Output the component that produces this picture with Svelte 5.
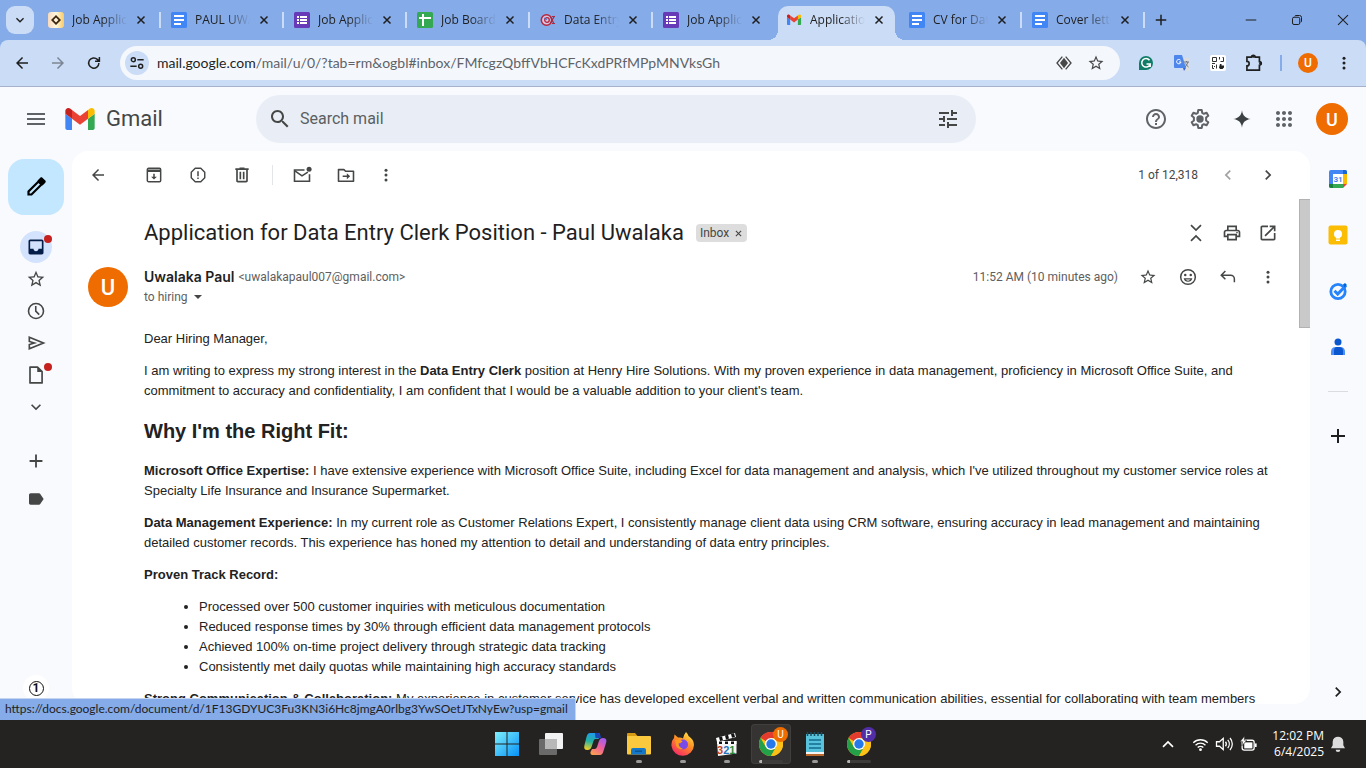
<script>
  const icons = {
    back: '<path d="M20 11H7.83l5.59-5.59L12 4l-8 8 8 8 1.41-1.41L7.83 13H20v-2z"/>',
    forward: '<path d="M4 11h12.17l-5.59-5.59L12 4l8 8-8 8-1.41-1.41L16.17 13H4v-2z"/>',
    reload: '<path d="M18.500 12a6.800 6.800 0 1 1-2-4.800L19 9.500M19.200 4v5.800h-5.800" fill="none" stroke="currentColor" stroke-width="2"/>',
    down: '<path d="M7.41 8.59L12 13.17l4.59-4.58L18 10l-6 6-6-6z"/>',
    left: '<path d="M15.41 7.41L14 6l-6 6 6 6 1.41-1.41L10.83 12z"/>',
    right: '<path d="M10 6L8.59 7.41 13.17 12l-4.58 4.59L10 18l6-6z"/>',
    close: '<path d="M5 5l14 14M19 5L5 19" fill="none" stroke="currentColor" stroke-width="3"/>',
    plus: '<path d="M19 13h-6v6h-2v-6H5v-2h6V5h2v6h6z"/>',
    more: '<circle cx="12" cy="5.500" r="2"/><circle cx="12" cy="12" r="2"/><circle cx="12" cy="18.500" r="2"/>',
    site: '<g fill="none" stroke="currentColor" stroke-width="2.2"><circle cx="6.500" cy="7" r="3"/><path d="M12.500 7H22M2 17h9.500"/><circle cx="17.500" cy="17" r="3"/></g>',
    diamond: '<path d="M9.500 2.500L1.500 12l8 9.500M14.500 2.500l8 9.500-8 9.500" fill="none" stroke="currentColor" stroke-width="2"/><path d="M12 4l6 8-6 8-6-8z"/>',
    star: '<path d="M22 9.240l-7.190-.620L12 2 9.190 8.630 2 9.240l5.460 4.730L5.820 21 12 17.270 18.180 21l-1.630-7.030L22 9.240zM12 15.400l-3.760 2.270 1-4.280-3.320-2.880 4.380-.380L12 6.100l1.710 4.040 4.380.380-3.320 2.880 1 4.280L12 15.400z"/>',
    puzzle: '<path d="M3.500 5h5.500a2.200 2.200 0 0 1 4.400 0H18.500v5.300a2.200 2.200 0 0 1 0 4.400V20.500h-15v-5a2.700 2.700 0 0 0 0-5.400z" fill="none" stroke="currentColor" stroke-width="2"/><circle cx="11.200" cy="4.200" r="1.600"/><circle cx="19.800" cy="12.500" r="1.600"/>',
    menu: '<path d="M3 18h18v-2H3v2zm0-5h18v-2H3v2zm0-7v2h18V6H3z"/>',
    search: '<path d="M15.500 14h-.790l-.280-.270C15.410 12.590 16 11.110 16 9.500 16 5.910 13.090 3 9.500 3S3 5.910 3 9.500 5.910 16 9.500 16c1.610 0 3.090-.590 4.230-1.570l.270.280v.790l5 4.990L20.490 19l-4.990-5zm-6 0C7.010 14 5 11.990 5 9.500S7.010 5 9.500 5 14 7.010 14 9.500 11.990 14 9.500 14z"/>',
    tune: '<path d="M3 17v2h6v-2H3zM3 5v2h10V5H3zm10 16v-2h8v-2h-8v-2h-2v6h2zM7 9v2H3v2h4v2h2V9H7zm14 4v-2H11v2h10zm-6-4h2V7h4V5h-4V3h-2v6z"/>',
    help: '<path d="M11 18h2v-2h-2v2zm1-16C6.480 2 2 6.480 2 12s4.480 10 10 10 10-4.480 10-10S17.520 2 12 2zm0 18c-4.410 0-8-3.590-8-8s3.590-8 8-8 8 3.590 8 8-3.590 8-8 8zm0-14c-2.210 0-4 1.790-4 4h2c0-1.100.900-2 2-2s2 .900 2 2c0 2-3 1.750-3 5h2c0-2.250 3-2.500 3-5 0-2.210-1.790-4-4-4z"/>',
    gear: '<path d="M10.300 3h3.400l.5 2.800 1.700 1 2.700-1 1.700 3-2.200 1.800v2.800l2.200 1.800-1.700 3-2.700-1-1.700 1-.5 2.800h-3.400l-.5-2.800-1.700-1-2.700 1-1.700-3 2.200-1.800v-2.800L3.700 8.800l1.700-3 2.700 1 1.700-1z" fill="none" stroke="currentColor" stroke-width="2" stroke-linejoin="round"/><circle cx="12" cy="12" r="3.700"/>',
    spark: '<path d="M12 1.500c.8 6.400 4.100 9.700 10.500 10.500-6.400.8-9.700 4.100-10.500 10.500C11.200 16.100 7.900 12.800 1.500 12 7.900 11.200 11.200 7.900 12 1.500z"/>',
    apps: '<path d="M6 8c1.100 0 2-.9 2-2s-.9-2-2-2-2 .9-2 2 .9 2 2 2zm6 12c1.100 0 2-.9 2-2s-.9-2-2-2-2 .9-2 2 .9 2 2 2zm-6 0c1.100 0 2-.9 2-2s-.9-2-2-2-2 .9-2 2 .9 2 2 2zm0-6c1.100 0 2-.9 2-2s-.9-2-2-2-2 .9-2 2 .9 2 2 2zm6 0c1.100 0 2-.9 2-2s-.9-2-2-2-2 .9-2 2 .9 2 2 2zm4-8c0 1.100.9 2 2 2s2-.9 2-2-.9-2-2-2-2 .9-2 2zm-4 2c1.100 0 2-.9 2-2s-.9-2-2-2-2 .9-2 2 .9 2 2 2zm6 6c1.100 0 2-.9 2-2s-.9-2-2-2-2 .9-2 2 .9 2 2 2zm0 6c1.100 0 2-.9 2-2s-.9-2-2-2-2 .9-2 2 .9 2 2 2z"/>',
    archive: '<rect x="4" y="4" width="16" height="16" rx="1.500" fill="none" stroke="currentColor" stroke-width="1.800"/><path d="M4 5.500h16V8.300H4zM11.100 10.500h1.800v3.500h2.600L12 17.500 8.500 14h2.600z"/>',
    spam: '<path d="M8.300 3h7.400L21 8.300v7.400L15.700 21H8.300L3 15.700V8.300z" fill="none" stroke="currentColor" stroke-width="1.900" stroke-linejoin="round"/><path d="M11 7h2v6.500h-2zM11 15.300h2v2h-2z"/>',
    trash: '<path d="M15 4V3H9v1H4v2h1v13c0 1.100.9 2 2 2h10c1.100 0 2-.9 2-2V6h1V4h-5zm2 15H7V6h10v13zM9 8h2v9H9zm4 0h2v9h-2z"/>',
    unread: '<path d="M15 6H3v13.500h18V11" fill="none" stroke="currentColor" stroke-width="1.900"/><path d="M3.500 7l8.500 6 7-4.500" fill="none" stroke="currentColor" stroke-width="1.900"/><circle cx="20.500" cy="5" r="3"/>',
    move: '<path d="M3 5.500h6.500l2 2H21v12H3z" fill="none" stroke="currentColor" stroke-width="1.900" stroke-linejoin="round"/><path d="M8 12.600h5V10l4 3.500-4 3.500v-2.600H8z"/>',
    fold: '<path d="M6 2.500l6 6 6-6M6 21.500l6-6 6 6" fill="none" stroke="currentColor" stroke-width="2"/>',
    print: '<path d="M19 8h-1V3H6v5H5c-1.660 0-3 1.340-3 3v6h4v4h12v-4h4v-6c0-1.660-1.340-3-3-3zM8 5h8v3H8V5zm8 12v2H8v-4h8v2zm2-2v-2H6v2H4v-4c0-.550.450-1 1-1h14c.550 0 1 .450 1 1v4h-2z"/><circle cx="18" cy="11.500" r="1"/>',
    open: '<path d="M19 19H5V5h7V3H5c-1.110 0-2 .9-2 2v14c0 1.100.890 2 2 2h14c1.100 0 2-.9 2-2v-7h-2v7zM14 3v2h3.590l-9.830 9.830 1.410 1.410L19 6.410V10h2V3h-7z"/>',
    smile: '<circle cx="12" cy="12" r="8.800" fill="none" stroke="currentColor" stroke-width="1.800"/><circle cx="8.700" cy="9.700" r="1.500"/><circle cx="15.300" cy="9.700" r="1.500"/><path d="M6.800 13.500h10.400a5.300 5.300 0 0 1-10.400 0z"/><path d="M9 15h6a4 4 0 0 1-6 0z" fill="#fff"/>',
    reply: '<path d="M8.500 4L3 9.500 8.500 15M3.500 9.500h12a5 5 0 0 1 5 5v4.500" fill="none" stroke="currentColor" stroke-width="2"/>',
    pencil: '<path d="M14.500 6.500l3 3L7.500 19.500H4.500v-3z" fill="none" stroke="currentColor" stroke-width="2.200"/><path d="M13.500 5.500l2.800-2.800c.6-.6 1.500-.6 2.100 0l2.900 2.900c.6.6.6 1.500 0 2.100L18.500 10.500z"/>',
    inbox: '<path d="M19 3H5c-1.100 0-2 .9-2 2v14c0 1.100.890 2 2 2h14c1.100 0 2-.9 2-2V5c0-1.100-.9-2-2-2zm0 11h-4c0 1.660-1.350 3-3 3s-3-1.340-3-3H5V5h14v9z"/>',
    clock: '<circle cx="12" cy="12" r="9" fill="none" stroke="currentColor" stroke-width="1.900"/><path d="M11.700 6v6.200l4.200 4.200" fill="none" stroke="currentColor" stroke-width="1.900"/>',
    send: '<path d="M4 5l17 7-17 7v-5.200l6-1.800-6-1.800z" fill="none" stroke="currentColor" stroke-width="2"/>',
    file: '<path d="M4.800 2.500h9l5.500 5.500v13.500h-14.500z" fill="none" stroke="currentColor" stroke-width="2" stroke-linejoin="round"/><path d="M13.500 2.500v6h6z"/>',
    label: '<path d="M4 3.500h12.500c.8 0 1.500.4 1.900 1L23.500 12l-5.100 7.500c-.4.600-1.100 1-1.900 1H4c-1.400 0-2.500-1.100-2.500-2.500V6c0-1.400 1.100-2.500 2.500-2.500z"/>',
    minus: '<path d="M3 12h18" stroke="currentColor" stroke-width="1.700"/>',
    restore: '<g fill="none" stroke="currentColor" stroke-width="2"><rect x="3" y="6.500" width="14.500" height="14.500" rx="3"/><path d="M7.500 4.500Q8 3 10 3h7a4 4 0 0 1 4 4v7q0 2-1.500 2.500"/></g>',
    exit: '<path d="M3.500 3.500l17 17M20.500 3.500l-17 17" stroke="currentColor" stroke-width="1.800"/>',
    up: '<path d="M6 15.500l6-6 6 6" fill="none" stroke="currentColor" stroke-width="2"/>',
    wifi: '<g fill="none" stroke="currentColor" stroke-width="1.900"><path d="M1.800 9.500a14.500 14.500 0 0 1 20.400 0M5 13a10 10 0 0 1 14 0M8 16.300a5.800 5.800 0 0 1 8 0"/></g><circle cx="12" cy="19.300" r="2"/>',
    volume: '<path d="M2 9h4l5-4.500v15L6 15H2zM14 9a5 5 0 0 1 0 6M17 6.500a8.500 8.500 0 0 1 0 11M20 4a12 12 0 0 1 0 16" fill="none" stroke="currentColor" stroke-width="1.700"/>',
    battery: '<rect x="3" y="6" width="17" height="14" rx="3" fill="none" stroke="currentColor" stroke-width="1.800"/><rect x="6" y="9" width="11.500" height="8.500"/><path d="M21 10.500h2.500v5H21z"/><path d="M6.500 0L0 8h3.800L2.500 14l7-8H6z" stroke="#242321" stroke-width=".8"/>',
    bell: '<path d="M12 1a8 8 0 0 0-8 7.500V14L1.500 18.500h21L20 14V8.500A8 8 0 0 0 12 1zM8.500 20.500h7a3.500 3.500 0 0 1-7 0z"/>'
  };

  const marks = {
    sun: '<defs><linearGradient id="peach" x2="1"><stop stop-color="#f8d9bd"/><stop offset=".5" stop-color="#fff6e0"/><stop offset="1" stop-color="#f9cb62"/></linearGradient></defs><rect width="16" height="16" rx="3" fill="url(#peach)"/><path d="M8 3L3 8l5 5 5-5zM8 5.500L10.500 8 8 10.500 5.500 8z" fill="#3c2412" fill-rule="evenodd"/>',
    docs: '<rect width="16" height="16" rx="1.500" fill="#4285f4"/><path d="M3 3h10v2H3zM3 7h10v2H3zM3 11h7v2H3z" fill="#fff"/>',
    forms: '<rect width="16" height="16" rx="1.500" fill="#673ab7"/><path d="M3 4h2v2H3zM6 4h7v2H6zM3 7h2v2H3zM6 7h7v2H6zM3 10h2v2H3zM6 10h7v2H6z" fill="#fff"/>',
    sheets: '<rect width="16" height="16" rx="1.500" fill="#34a853"/><path d="M5 2h2v3h7v2H7v7H5V7H2V5h3z" fill="#fff"/>',
    fish: '<circle cx="6.500" cy="8" r="5.200" fill="#d9c3e0" stroke="#b3263c" stroke-width="1.500"/><circle cx="7" cy="8" r="2.300" fill="none" stroke="#b3263c" stroke-width="1.300"/><path d="M4 6l3 1.500" stroke="#2e6fce"/><path d="M10.500 4.500l3.500 7.500M14.500 4l-4 7M12 4.500h3M12 11.500h3" fill="none" stroke="#a52a45" stroke-width="1.200"/>',
    gmail: '<g transform="translate(1 2.500) scale(.16) translate(-52 -42)"><path fill="#4285f4" d="M58 108h14V74L52 59v43c0 3.320 2.690 6 6 6"/><path fill="#34a853" d="M120 108h14c3.320 0 6-2.690 6-6V59l-20 15"/><path fill="#fbbc04" d="M120 48v26l20-15v-8c0-7.420-8.470-11.650-14.400-7.200"/><path fill="#ea4335" d="M72 74V48l24 18 24-18v26L96 92"/><path fill="#c5221f" d="M52 51v8l20 15V48l-5.600-4.200c-5.940-4.450-14.400-.220-14.400 7.200"/></g>'
  };

  const tabs = [
    { mark: 'sun', title: 'Job Application' },
    { mark: 'docs', title: 'PAUL UWALAKA' },
    { mark: 'forms', title: 'Job Application' },
    { mark: 'sheets', title: 'Job Board List' },
    { mark: 'fish', title: 'Data Entry Clerk' },
    { mark: 'forms', title: 'Job Application' },
    { mark: 'gmail', title: 'Application for', active: true },
    { mark: 'docs', title: 'CV for Data Entry' },
    { mark: 'docs', title: 'Cover letter' }
  ];

  const folders = [
    { icon: 'inbox', name: 'Inbox', dot: true, active: true },
    { icon: 'star', name: 'Starred' },
    { icon: 'clock', name: 'Snoozed' },
    { icon: 'send', name: 'Sent' },
    { icon: 'file', name: 'Drafts', dot: true },
    { icon: 'down', name: 'More' }
  ];

  const chrome = '<circle cx="12" cy="12" r="12" fill="#fbc116"/><path d="M12 12L1.600 6A12 12 0 0 1 22.400 6H12z" fill="#e33b2e"/><path d="M1.600 6a12 12 0 0 0 10.400 18l5.200-9L12 12l-5.200 3z" fill="#24a148"/><path d="M22.400 6H12l5.200 9L12 24A12 12 0 0 0 22.400 6z" fill="#fbc116"/><circle cx="12" cy="12" r="6" fill="#fff"/><circle cx="12" cy="12" r="4.700" fill="#2679ea"/>';

  const apps = [
    { name: 'Start', art: '<defs><linearGradient id="win" x2="1" y2="1"><stop stop-color="#7ff0fb"/><stop offset="1" stop-color="#0591f8"/></linearGradient></defs><path d="M0 0h11.500v11.500H0zM12.500 0H24v11.500H12.500zM0 12.500h11.500V24H0zM12.500 12.500H24V24H12.500z" fill="url(#win)"/>' },
    { name: 'Task view', art: '<rect x="6" y="1" width="18" height="16" rx="1" fill="#f2f2f2"/><rect x="0" y="7" width="18" height="16" rx="1" fill="#6a6a6a"/><path d="M6 7h12v10H6z" fill="#b8b8b8"/>' },
    { name: 'Copilot', art: '<defs><linearGradient id="cp1" x1=".5" x2=".3" y2="1"><stop stop-color="#1f9bea"/><stop offset=".5" stop-color="#25b2a0"/><stop offset="1" stop-color="#f3cf26"/></linearGradient><linearGradient id="cp2" x1=".8" x2=".2" y2="1"><stop stop-color="#a05cf5"/><stop offset=".5" stop-color="#f0609a"/><stop offset="1" stop-color="#fba04e"/></linearGradient></defs><path d="M7 1h8q2.500 0 2 3l-1.500 3h-3q-1.500 0-2 2l-2 6q-1 3-4 3-4.500 0-3-5l2-8Q4.500 1 7 1z" fill="url(#cp1)"/><path d="M17 23H9.500q-2.500 0-2-3L9 17h2.500q2 0 2.500-2l2-6q1-3 4-3 4.500 0 3 5l-2.500 8q-1 4-3.500 4z" fill="url(#cp2)"/><path d="M12 1h2.500q3 0 3.500 5h-5.500z" fill="#1945b6"/>' },
    { name: 'File Explorer', run: true, art: '<path d="M0 2q0-1 1-1h7l2.500 3H22v5H0z" fill="#d79a13"/><rect y="4" width="24" height="18.500" rx="1" fill="#fbc93d"/><path d="M4 22.500V18q0-2 2-2h11q2 0 2 2v4.500z" fill="#1477c8"/><path d="M8 18.500h7v1.500H8z" fill="#0c5593"/>' },
    { name: 'Firefox', run: true, art: '<defs><linearGradient id="ff" x1=".8" x2=".2" y2="1"><stop stop-color="#ffe645"/><stop offset=".45" stop-color="#ff8a23"/><stop offset="1" stop-color="#f7226e"/></linearGradient></defs><path d="M15 0q2 2 2.500 4 5.500 3.500 5.500 9A11.300 11.300 0 0 1 .5 14Q0 9 3 6l.5-3.500L7 5.500q3-.5 5 1Q12.500 3 15 0z" fill="url(#ff)"/><circle cx="12" cy="12.500" r="5" fill="#7a4be8"/><path d="M4 8q5-1.500 7.500 1.300-1 1.700-4 2.200Q8 16 12 16.500q-4 2-6.800-2.200z" fill="#ff9a1e"/>' },
    { name: 'Media Player Classic', run: true, art: '<path d="M2 9h19.500v12.500L3 24z" fill="#f5f5f5"/><path d="M1 6L20 1l1 4L2 10zM2 9h19.500v3H2z" fill="#fff"/><path d="M4 5.200l3-.8 1 3.800-3 .8zM10 3.600l3-.8 1 3.800-3 .8zM16 2l3-.8 1 3.800-3 .8zM4 9.500h3V12H4zM10 9.500h3V12h-3zM16 9.500h3V12h-3z" fill="#111"/><text x="2" y="22" font-family="Liberation Sans" font-size="11" font-weight="700"><tspan fill="#c64425">3</tspan><tspan fill="#2675be">2</tspan><tspan fill="#2b8c3b">1</tspan></text>' },
    { name: 'Google Chrome, profile U', art: chrome, badge: 'U', wide: true, active: true },
    { name: 'Notepad', run: true, art: '<path d="M3 20h18v4H3z" fill="#b9682d"/><path d="M3 2h18v19H3z" fill="#58c1dc"/><path d="M3 20h18v2H3z" fill="#f4f4f4"/><path d="M6 8h12M6 12h12M6 16h12" stroke="#126b8e" stroke-width="1.500"/><path d="M4.500 0v4M8 0v4M11.500 0v4M15 0v4M18.500 0v4" stroke="#174e62" stroke-width="1.500"/>' },
    { name: 'Google Chrome, profile P', art: chrome, badge: 'P', wide: true }
  ];

  const sideApps = [
    { name: 'Calendar', art: '<path d="M4 2h14q2 0 2 2v11l-5 5H4q-2 0-2-2V4q0-2 2-2z" fill="#4285f4"/><path d="M16 2h2q2 0 2 2v2h-4z" fill="#1967d2"/><path d="M16 6h4v10h-4z" fill="#fbbc04"/><path d="M2 16h4v4H4q-2 0-2-2z" fill="#188038"/><path d="M6 16h10v4H6z" fill="#34a853"/><path d="M16 16h4l-4 4z" fill="#ea4335"/><path d="M6 6h10v10H6z" fill="#fff"/><text x="11" y="14" text-anchor="middle" fill="#4285f4" font-family="Roboto" font-size="8" font-weight="700">31</text>' },
    { name: 'Keep', art: '<rect x="1.500" y="1.500" width="19" height="19" rx="2" fill="#fbbc04"/><circle cx="11" cy="10" r="4" fill="#fff"/><path d="M9 11h4v3.500H9zM9 15.500h4v1.500H9z" fill="#fff"/>' },
    { name: 'Tasks', art: '<circle cx="11" cy="11.500" r="7.200" fill="none" stroke="#2684fc" stroke-width="2.800"/><path d="M7.500 10.800l3.200 3.200L19 5.500" fill="none" stroke="#2684fc" stroke-width="3"/><path d="M16 4.500l2-1.500 2 2-2.500 2.500z" fill="#0066da"/>' },
    { name: 'Contacts', art: '<circle cx="11" cy="6" r="3.500" fill="#0b57d0"/><path d="M4 19v-3q0-5 5-5h4q5 0 5 5v3z" fill="#4c8df6"/><path d="M7 19v-4q0-4 3-4h2q4 0 4 4v4z" fill="#0b57d0"/>' }
  ];
</script>

{#snippet icon(name, size)}
  <svg class="icon" viewBox="0 0 24 24" width={size} height={size} aria-hidden="true">{@html icons[name]}</svg>
{/snippet}

<div class="desktop">
  <div class="tabstrip">
    <button class="tab-search" aria-label="Search tabs">{@render icon('down', 16)}</button>
    {#each tabs as tab}
      <div class="tab" class:active={tab.active}>
        <svg width="16" height="16" viewBox="0 0 16 16" aria-hidden="true">{@html marks[tab.mark]}</svg>
        <span class="tab-title">{tab.title}</span>
        <button class="tab-close" aria-label="Close tab">{@render icon('close', 12)}</button>
      </div>
    {/each}
    <button class="new-tab" aria-label="New tab">{@render icon('plus', 18)}</button>
    <div class="window-controls">
      <button aria-label="Minimize">{@render icon('minus', 14)}</button>
      <button aria-label="Restore">{@render icon('restore', 12)}</button>
      <button aria-label="Close">{@render icon('exit', 14)}</button>
    </div>
  </div>

  <div class="browser-bar">
    <button aria-label="Back">{@render icon('back', 18)}</button>
    <button class="dim" aria-label="Forward">{@render icon('forward', 18)}</button>
    <button aria-label="Reload">{@render icon('reload', 18)}</button>
    <div class="omnibox">
      <button class="site-info" aria-label="Site information">{@render icon('site', 16)}</button>
      <span class="url">mail.google.com<span>/mail/u/0/?tab=rm&amp;ogbl#inbox/FMfcgzQbffVbHCFcKxdPRfMPpMNVksGh</span></span>
      <button aria-label="Preview">{@render icon('diamond', 16)}</button>
      <button aria-label="Bookmark">{@render icon('star', 18)}</button>
    </div>
    <div class="extensions">
      <button aria-label="Grammarly">
        <svg width="16" height="16" viewBox="0 0 16 16"><path d="M8 1a7 7 0 1 1 0 14H1V8a7 7 0 0 1 7-7z" fill="#0e7c66"/><path d="M11.500 5.200A4.300 4.300 0 1 0 12.200 9H8.500M12.200 8.500V12" fill="none" stroke="#fff" stroke-width="1.500"/></svg>
      </button>
      <button aria-label="Translate">
        <svg width="16" height="16" viewBox="0 0 16 16"><path d="M6 3h9q1 0 1 1v11q0 1-1 1H9z" fill="#dadce0"/><path d="M1 0h7l4 13H1q-1 0-1-1V1q0-1 1-1z" fill="#4e87ec"/><path d="M9 13h3l-2 3z" fill="#3367d6"/><path d="M6.500 5.200A2.200 2.200 0 1 0 7 7H5" fill="none" stroke="#fff"/><path d="M10 7h5M12.500 6v1M14 7q-1 3-3 5M11.500 8.500q1 2 3 3.500" fill="none" stroke="#6b7686"/></svg>
      </button>
      <button aria-label="QR code">
        <svg width="16" height="16" viewBox="0 0 16 16"><rect width="16" height="16" rx="2" fill="#fff"/><g fill="none" stroke="#333"><path d="M2.500 2.500h4v4h-4zM2.500 10v3.500H4M6.500 9.500v4M9.500 2v2.500M12.500 2.500h1v4h-3M2 8.500h3M4.500 11v1"/></g><path d="M10 9h1.500v1.500H14v2L12.500 14H10l-1-1.500z" fill="#222"/></svg>
      </button>
      <button aria-label="Extensions">{@render icon('puzzle', 20)}</button>
      <i class="bar-divider"></i>
      <button aria-label="Profile"><span class="avatar tiny">U</span></button>
      <button aria-label="Browser menu">{@render icon('more', 18)}</button>
    </div>
  </div>

  <div class="mail">
    <header>
      <div class="brand">
        <button aria-label="Main menu">{@render icon('menu', 24)}</button>
        <svg class="gmail-logo" viewBox="52 42 88 66" width="30" height="22" aria-hidden="true">
          <path fill="#4285f4" d="M58 108h14V74L52 59v43c0 3.320 2.690 6 6 6" /><path fill="#34a853" d="M120 108h14c3.320 0 6-2.690 6-6V59l-20 15" /><path fill="#fbbc04" d="M120 48v26l20-15v-8c0-7.420-8.470-11.650-14.400-7.200" /><path fill="#ea4335" d="M72 74V48l24 18 24-18v26L96 92" /><path fill="#c5221f" d="M52 51v8l20 15V48l-5.600-4.200c-5.940-4.450-14.400-.220-14.400 7.200" />
        </svg>
        <span class="wordmark">Gmail</span>
      </div>
      <div class="search">
        <button aria-label="Search">{@render icon('search', 24)}</button>
        <input type="text" placeholder="Search mail" aria-label="Search mail" />
        <button aria-label="Show search options">{@render icon('tune', 24)}</button>
      </div>
      <div class="account">
        <button aria-label="Support">{@render icon('help', 24)}</button>
        <button aria-label="Settings">{@render icon('gear', 24)}</button>
        <button aria-label="Gemini">{@render icon('spark', 20)}</button>
        <button aria-label="Google apps">{@render icon('apps', 24)}</button>
        <button aria-label="Account"><span class="avatar small">U</span></button>
      </div>
    </header>

    <div class="columns">
      <nav class="rail">
        <button class="compose" aria-label="Compose">{@render icon('pencil', 24)}</button>
        {#each folders as f}
          <button class="folder" class:active={f.active} aria-label={f.name}>
            {@render icon(f.icon, 20)}
            {#if f.dot}<i class="dot"></i>{/if}
          </button>
        {/each}
        <button class="folder create" aria-label="Create new label">{@render icon('plus', 22)}</button>
        <button class="folder labels" aria-label="Labels">{@render icon('label', 16)}</button>
        <span class="badge-one"><b>1</b></span>
      </nav>

      <main>
        <div class="toolbar">
          <button aria-label="Back to Inbox">{@render icon('back', 18)}</button>
          <div class="tool-group">
            <button aria-label="Archive">{@render icon('archive', 20)}</button>
            <button aria-label="Report spam">{@render icon('spam', 18)}</button>
            <button aria-label="Delete">{@render icon('trash', 20)}</button>
          </div>
          <div class="tool-group split">
            <button aria-label="Mark as unread">{@render icon('unread', 20)}</button>
            <button aria-label="Move to">{@render icon('move', 20)}</button>
            <button class="narrow" aria-label="More">{@render icon('more', 18)}</button>
          </div>
          <span class="count">1 of 12,318</span>
          <button class="mid dim" aria-label="Newer">{@render icon('left', 20)}</button>
          <button class="mid" aria-label="Older">{@render icon('right', 20)}</button>
        </div>

        <div class="thread">
          <div class="subject">
            <h1>Application for Data Entry Clerk Position - Paul Uwalaka</h1>
            <span class="chip">Inbox <button aria-label="Remove label Inbox">{@render icon('close', 9)}</button></span>
            <div class="subject-tools">
              <button aria-label="Collapse all">{@render icon('fold', 20)}</button>
              <button aria-label="Print all">{@render icon('print', 20)}</button>
              <button aria-label="In new window">{@render icon('open', 20)}</button>
            </div>
          </div>

          <div class="sender">
            <span class="avatar large">U</span>
            <div class="who">
              <div class="line">
                <b>Uwalaka Paul</b>
                <span class="address">&lt;uwalakapaul007@gmail.com&gt;</span>
                <span class="when">11:52 AM (10 minutes ago)</span>
                <button class="mid" aria-label="Star">{@render icon('star', 18)}</button>
                <button class="mid" aria-label="Add reaction">{@render icon('smile', 20)}</button>
                <button class="mid" aria-label="Reply">{@render icon('reply', 18)}</button>
                <button class="mid" aria-label="More options">{@render icon('more', 18)}</button>
              </div>
              <div class="to">to hiring <i class="caret"></i></div>
            </div>
          </div>

          <article>
            <p>Dear Hiring Manager,</p>
            <p>I am writing to express my strong interest in the <b>Data Entry Clerk</b> position at Henry Hire Solutions. With my proven experience in data management, proficiency in Microsoft Office Suite, and commitment to accuracy and confidentiality, I am confident that I would be a valuable addition to your client's team.</p>
            <h2>Why I'm the Right Fit:</h2>
            <p><b>Microsoft Office Expertise:</b> I have extensive experience with Microsoft Office Suite, including Excel for data management and analysis, which I've utilized throughout my customer service roles at Specialty Life Insurance and Insurance Supermarket.</p>
            <p><b>Data Management Experience:</b> In my current role as Customer Relations Expert, I consistently manage client data using CRM software, ensuring accuracy in lead management and maintaining detailed customer records. This experience has honed my attention to detail and understanding of data entry principles.</p>
            <p><b>Proven Track Record:</b></p>
            <ul>
              <li>Processed over 500 customer inquiries with meticulous documentation</li>
              <li>Reduced response times by 30% through efficient data management protocols</li>
              <li>Achieved 100% on-time project delivery through strategic data tracking</li>
              <li>Consistently met daily quotas while maintaining high accuracy standards</li>
            </ul>
            <p><b>Strong Communication &amp; Collaboration:</b> My experience in customer service has developed excellent verbal and written communication abilities, essential for collaborating with team members</p>
          </article>
          <i class="scroll-thumb"></i>
        </div>
      </main>

      <aside>
        {#each sideApps as a}
          <button aria-label={a.name}><svg width="22" height="22" viewBox="0 0 22 22" aria-hidden="true">{@html a.art}</svg></button>
        {/each}
        <i class="side-divider"></i>
        <button class="add" aria-label="Get add-ons">{@render icon('plus', 24)}</button>
        <button class="hide" aria-label="Hide side panel">{@render icon('right', 20)}</button>
      </aside>
    </div>

    <div class="link-status">https://docs.google.com/document/d/1F13GDYUC3Fu3KN3i6Hc8jmgA0rlbg3YwSOetJTxNyEw?usp=gmail</div>
  </div>

  <footer class="taskbar">
    <div class="apps">
      {#each apps as a}
        <button class="app" class:active={a.active} aria-label={a.name}>
          <svg width="24" height="24" viewBox="0 0 24 24" aria-hidden="true">{@html a.art}</svg>
          {#if a.badge}<span class="profile" class:purple={a.badge === 'P'}>{a.badge}</span>{/if}
          {#if a.run || a.wide}<i class="run" class:wide={a.wide}></i>{/if}
        </button>
      {/each}
    </div>
    <div class="tray">
      <button aria-label="Show hidden icons">{@render icon('up', 20)}</button>
      <button aria-label="Wi-Fi">{@render icon('wifi', 17)}</button>
      <button aria-label="Volume">{@render icon('volume', 18)}</button>
      <button aria-label="Battery">{@render icon('battery', 17)}</button>
      <div class="clock">12:02 PM<br />6/4/2025</div>
      <button class="bell" aria-label="Notifications">{@render icon('bell', 16)}</button>
    </div>
  </footer>
</div>

<style>
  :global(body) { margin: 0; }
  * { box-sizing: border-box; }
  .desktop {
    height: 100vh;
    display: flex;
    flex-direction: column;
    overflow: hidden;
    background: #85abe8;
    font-family: "Open Sans", "Noto Sans", sans-serif;
    color: #1f1f1f;
  }
  button {
    display: flex;
    align-items: center;
    justify-content: center;
    flex: none;
    padding: 0;
    border: 0;
    background: none;
    color: inherit;
    font: inherit;
  }
  svg { display: block; flex: none; }
  .icon { fill: currentColor; }

  .tabstrip { display: flex; height: 40px; flex: none; align-items: stretch; padding: 6px 0 0 6px; gap: 6px; }
  .tab-search { width: 28px; height: 28px; border-radius: 9px; background: #cbdcf6; }
  .tab {
    position: relative;
    display: flex;
    align-items: center;
    width: 117px;
    height: 34px;
    padding: 0 10px 6px 8px;
  }
  .tab-title {
    flex: 1;
    margin: 0 8px;
    overflow: hidden;
    white-space: nowrap;
    font-size: 12px;
    line-height: 16px;
    mask-image: linear-gradient(to right, #000 55%, transparent);
  }
  .tab::after { content: ""; position: absolute; right: -4px; top: 6px; width: 2px; height: 16px; background: #cbdcf6; }
  .tab.active::after, .tab:has(+ .active)::after { display: none; }
  .tab.active { background: #cbdcf6; border-radius: 10px 10px 0 0; }
  .tab.active::before {
    content: "";
    position: absolute;
    left: -10px;
    right: -10px;
    bottom: 0;
    height: 10px;
    background:
      radial-gradient(circle at 0 0, transparent 10px, #cbdcf6 10px) left / 10px 10px no-repeat,
      radial-gradient(circle at 100% 0, transparent 10px, #cbdcf6 10px) right / 10px 10px no-repeat;
  }
  .tab-close { width: 12px; }
  .new-tab { width: 28px; height: 28px; }
  .window-controls { display: flex; margin-left: auto; height: 28px; }
  .window-controls button { width: 46px; }

  .browser-bar {
    display: flex;
    align-items: center;
    flex: none;
    height: 46px;
    padding: 0 4px;
    background: #cbdcf6;
    border-radius: 8px 8px 0 0;
  }
  .browser-bar > button { width: 36px; height: 36px; }
  .browser-bar > .dim { opacity: 0.45; }
  .omnibox {
    display: flex;
    align-items: center;
    flex: 1;
    height: 34px;
    margin-left: 8px;
    padding: 0 8px 0 5px;
    border-radius: 17px;
    background: #f4f8fd;
    color: #474747;
  }
  .omnibox button { width: 32px; }
  .omnibox .site-info { width: 24px; height: 24px; border-radius: 12px; background: #cbdcf6; color: #1f1f1f; }
  .url { flex: 1; margin-left: 8px; font-family: Lato, sans-serif; font-size: 14px; line-height: 20px; color: #1f1f1f; white-space: nowrap; }
  .url span { color: #5f6368; }
  .extensions { display: flex; align-items: center; margin-left: 8px; }
  .extensions button { width: 36px; }
  .bar-divider { width: 2px; height: 16px; margin: 0 8px; background: #85abe8; }
  .avatar {
    display: flex;
    align-items: center;
    justify-content: center;
    flex: none;
    border-radius: 50%;
    background: #ef6c00;
    color: #fff;
    font-family: Roboto, sans-serif;
    font-weight: 500;
  }
  .avatar.tiny { width: 20px; height: 20px; font-size: 12px; }
  .avatar.small { width: 32px; height: 32px; font-size: 18px; }
  .avatar.large { width: 40px; height: 40px; font-size: 22px; }

  .mail {
    position: relative;
    display: flex;
    flex-direction: column;
    flex: 1;
    min-height: 0;
    border-top: 1px solid #a6b2cd;
    background: #f9fafe;
    font-family: Roboto, sans-serif;
    color: #444746;
  }
  header { display: flex; align-items: center; flex: none; height: 64px; }
  .brand { display: flex; align-items: center; width: 256px; flex: none; padding-left: 12px; color: #5f6368; }
  .brand button { width: 48px; }
  .gmail-logo { margin-left: 5px; }
  .wordmark { margin-left: 11px; font-size: 22px; line-height: 28px; color: #444746; }
  .search {
    display: flex;
    align-items: center;
    flex: 0 1 720px;
    height: 48px;
    padding: 0 8px 0 4px;
    border-radius: 24px;
    background: #e9eef6;
  }
  .search button { width: 40px; height: 40px; }
  .search input { flex: 1; min-width: 0; padding: 0; border: 0; outline: 0; background: none; font: 16px/24px Roboto, sans-serif; color: #444746; }
  .search input::placeholder { color: #5b5f62; opacity: 1; }
  .account { display: flex; align-items: center; margin-left: auto; padding-right: 10px; color: #5f6368; }
  .account button { width: 42px; }
  .account button:first-child { width: 46px; }
  .account button:nth-child(3) { color: #3c4043; }
  .account button:last-child { width: 48px; margin-left: 3px; }

  .columns { display: flex; flex: 1; min-height: 0; }
  .rail { display: flex; flex-direction: column; align-items: center; width: 72px; flex: none; padding: 8px 0 19px; }
  .compose { width: 56px; height: 56px; margin-bottom: 16px; border-radius: 16px; background: #c2e7ff; color: #000; }
  .folder { position: relative; width: 32px; height: 32px; border-radius: 16px; }
  .folder.active { background: #d3e3fd; color: #041e49; }
  .dot { position: absolute; top: 4px; right: 0; width: 8px; height: 8px; border-radius: 4px; background: #c5221f; }
  .create { margin-top: 22px; }
  .labels { margin-top: 6px; }
  .badge-one { display: flex; align-items: center; justify-content: center; width: 26px; height: 26px; margin-top: auto; border-radius: 13px; background: #fff; color: #111; }
  .badge-one b { width: 15px; height: 15px; border: 1px solid #111; border-radius: 8px; font-size: 12px; line-height: 13px; text-align: center; }

  main { display: flex; flex-direction: column; flex: 1; min-width: 0; margin-bottom: 16px; border-radius: 16px; background: #fff; overflow: hidden; }
  .toolbar { display: flex; align-items: center; flex: none; height: 48px; padding: 0 22px 0 4px; }
  .toolbar button { width: 44px; height: 32px; }
  .tool-group { display: flex; margin-left: 12px; }
  .tool-group.split { margin-left: 8px; padding-left: 8px; position: relative; }
  .split::before { content: ""; position: absolute; left: 0; top: 6px; width: 1px; height: 20px; background: #e3e5e8; }
  .toolbar .narrow { width: 36px; }
  .toolbar .mid, .mid { width: 40px; }
  .toolbar .dim { opacity: 0.5; }
  .count { margin-left: auto; margin-right: 10px; font-size: 12px; line-height: 16px; }

  .thread { position: relative; flex: 1; min-height: 0; overflow: hidden; }
  .scroll-thumb { position: absolute; right: 0; top: 0; width: 11px; height: 129px; background: #c9c9c9; border: 1px solid #b2b2b2; border-right: 0; }
  .subject { display: flex; align-items: center; height: 68px; padding: 0 24px 0 72px; }
  h1 { margin: 0; font-size: 22px; line-height: 28px; font-weight: 400; color: #1f1f1f; white-space: nowrap; }
  .chip { display: flex; align-items: center; gap: 4px; height: 18px; margin-left: 12px; padding: 0 4px; border-radius: 4px; background: #ddd; font-size: 12px; line-height: 18px; }
  .chip button { width: 10px; }
  .subject-tools { display: flex; margin-left: auto; }
  .subject-tools button { width: 36px; }
  .sender { display: flex; align-items: center; height: 40px; padding: 0 22px 0 16px; }
  .who { flex: 1; margin-left: 16px; }
  .line { display: flex; align-items: center; height: 20px; }
  .line b { font-family: Inter, Roboto, sans-serif; font-size: 14px; line-height: 20px; font-weight: 600; color: #1f1f1f; }
  .address, .when, .to { font-size: 12px; line-height: 20px; color: #5e5e5e; }
  .address { margin-left: 4px; }
  .when { margin-left: auto; margin-right: 10px; }
  .line .mid { height: 20px; }
  .to { display: flex; align-items: center; }
  .caret { margin-left: 6px; border: 4px solid transparent; border-top: 4px solid #444746; border-bottom: 0; }

  article { padding: 22px 38px 0 72px; font: 13px/20px "Liberation Sans", Arial, sans-serif; color: #222; }
  p, ul { margin: 0 0 12px; }
  ul { padding-left: 55px; }
  h2 { margin: 0 0 12px; font-size: 20px; line-height: 36px; }

  aside { display: flex; flex-direction: column; align-items: center; width: 56px; flex: none; color: #1f1f1f; }
  aside button { width: 56px; height: 56px; }
  .side-divider { width: 20px; height: 1px; margin: 16px 0; background: #dadce0; }
  aside .hide { margin-top: auto; }

  .link-status {
    position: absolute;
    left: 0;
    bottom: 0;
    height: 22px;
    padding: 0 7px 0 5px;
    border-top: 1px solid #c5d5ef;
    border-right: 1px solid #c5d5ef;
    background: #85abe8;
    font: 12px/20px Lato, "Open Sans", sans-serif;
    color: #1f1f1f;
    white-space: nowrap;
  }

  .taskbar { display: grid; grid-template-columns: 1fr auto 1fr; align-items: center; flex: none; height: 48px; background: #242321; color: #fff; }
  .apps { display: flex; gap: 4px; grid-column: 2; }
  .app { position: relative; width: 40px; height: 40px; border-radius: 4px; }
  .app.active { background: #353432; box-shadow: inset 0 0 0 1px #403f3d; }
  .profile { position: absolute; right: 3px; top: 3px; width: 15px; height: 15px; border-radius: 8px; background: #ef6c00; font: 10px/15px Roboto, sans-serif; }
  .profile.purple { background: #512da8; }
  .run { position: absolute; bottom: 1px; left: 17px; width: 6px; height: 3px; border-radius: 2px; background: #9a9a98; }
  .run.wide { left: 8px; width: 24px; background: linear-gradient(to right, #b5b5b3 3px, #3d3c3a 3px); }
  .tray { display: flex; align-items: center; justify-content: flex-end; padding-right: 20px; }
  .tray button { width: 24px; }
  .tray button:first-child { width: 40px; }
  .clock { margin-left: 12px; text-align: right; font-size: 12px; line-height: 16px; }
  .tray .bell { width: 16px; margin-left: 6px; color: #dcdcdc; }
</style>
